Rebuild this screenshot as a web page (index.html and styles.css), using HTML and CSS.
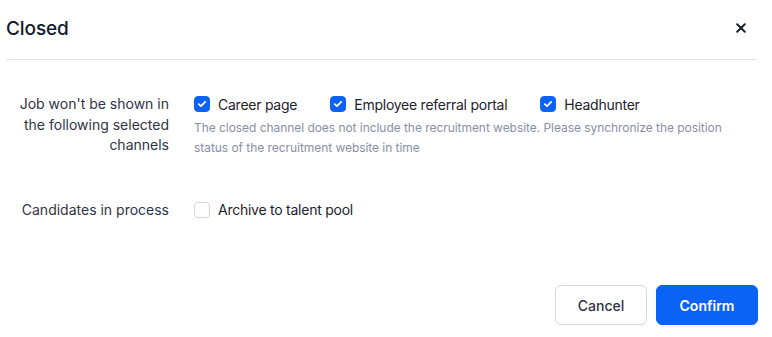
FILE: index.html
```html
<!DOCTYPE html>
<html>
<head>
<meta charset="utf-8">
<link rel="stylesheet" href="styles.css">
</head>
<body>
<div class="dialog">
  <div class="header">
    <div class="title">Closed</div>
    <button class="close" aria-label="Close">
      <svg width="10" height="10" viewBox="0 0 10 10"><path d="M1.2 1.2 L8.8 8.8 M8.8 1.2 L1.2 8.8" stroke="#1f2329" stroke-width="2" stroke-linecap="round"/></svg>
    </button>
  </div>
  <div class="body">
    <div class="row">
      <div class="label">Job won't be shown in the following selected channels</div>
      <div class="content">
        <div class="checks">
          <label class="check"><span class="box on"><svg width="10" height="8" viewBox="0 0 10 8"><path d="M1.8 4.2 L4 6.2 L8.2 1.9" fill="none" stroke="#fff" stroke-width="1.8" stroke-linecap="round" stroke-linejoin="round"/></svg></span>Career page</label>
          <label class="check"><span class="box on"><svg width="10" height="8" viewBox="0 0 10 8"><path d="M1.8 4.2 L4 6.2 L8.2 1.9" fill="none" stroke="#fff" stroke-width="1.8" stroke-linecap="round" stroke-linejoin="round"/></svg></span>Employee referral portal</label>
          <label class="check"><span class="box on"><svg width="10" height="8" viewBox="0 0 10 8"><path d="M1.8 4.2 L4 6.2 L8.2 1.9" fill="none" stroke="#fff" stroke-width="1.8" stroke-linecap="round" stroke-linejoin="round"/></svg></span>Headhunter</label>
        </div>
        <div class="hint">The closed channel does not include the recruitment website. Please synchronize the position status of the recruitment website in time</div>
      </div>
    </div>
    <div class="row row2">
      <div class="label">Candidates in process</div>
      <div class="content">
        <div class="checks">
          <label class="check"><span class="box"></span>Archive to talent pool</label>
        </div>
      </div>
    </div>
  </div>
  <div class="footer">
    <button class="btn cancel">Cancel</button>
    <button class="btn confirm">Confirm</button>
  </div>
</div>
</body>
</html>
```
FILE: styles.css
```css
* { box-sizing: border-box; }
html, body { margin: 0; padding: 0; background: #fff; }
body { font-family: Inter, "Noto Sans", sans-serif; color: #1f2329; }
.dialog { width: 772px; height: 337px; display: flex; flex-direction: column; }
.header {
  margin: 0 15px 0 6px;
  height: 60px;
  border-bottom: 1px solid #e4e5ec;
  display: flex; align-items: center; justify-content: space-between;
  padding-bottom: 3px;
}
.title { font-size: 19px; font-weight: 500; color: #141a2e; letter-spacing: -0.1px; }
.close { border: 0; background: none; padding: 0; margin-right: 11px; display: flex; cursor: pointer; }
.body { padding: 34px 0 0 6px; flex: 1; }
.row { display: flex; gap: 25px; }
.row2 { margin-top: 42px; }
.label {
  width: 163px; text-align: right; font-size: 14px; line-height: 20.5px;
  color: #2f3447; flex: none;
}
.content { flex: 1; }
.checks { display: flex; gap: 33px; height: 20.5px; align-items: center; }
.check { display: flex; align-items: center; gap: 8px; font-size: 14px; color: #1f2329; letter-spacing: -0.25px; }
.box {
  width: 16px; height: 16px; border-radius: 4px; border: 1px solid #d3d5dc; background: #fff;
  display: flex; align-items: center; justify-content: center; flex: none;
}
.box.on { background: #0b63f6; border-color: #0b63f6; }
.hint { font-size: 12px; line-height: 20px; color: #8a8fa6; margin-top: 3px; width: 540px; letter-spacing: -0.05px; }
.footer { display: flex; justify-content: flex-end; gap: 9px; padding: 0 14px 12px 0; }
.btn {
  height: 40px; border-radius: 6px; font-family: inherit; font-size: 14px; font-weight: 500; cursor: pointer;
}
.cancel { width: 92px; background: #fff; border: 1px solid #d6d8e0; color: #2f3447; }
.confirm { width: 102px; background: #0b63f6; border: 1px solid #0b63f6; color: #fff; font-weight: 600; }
```
